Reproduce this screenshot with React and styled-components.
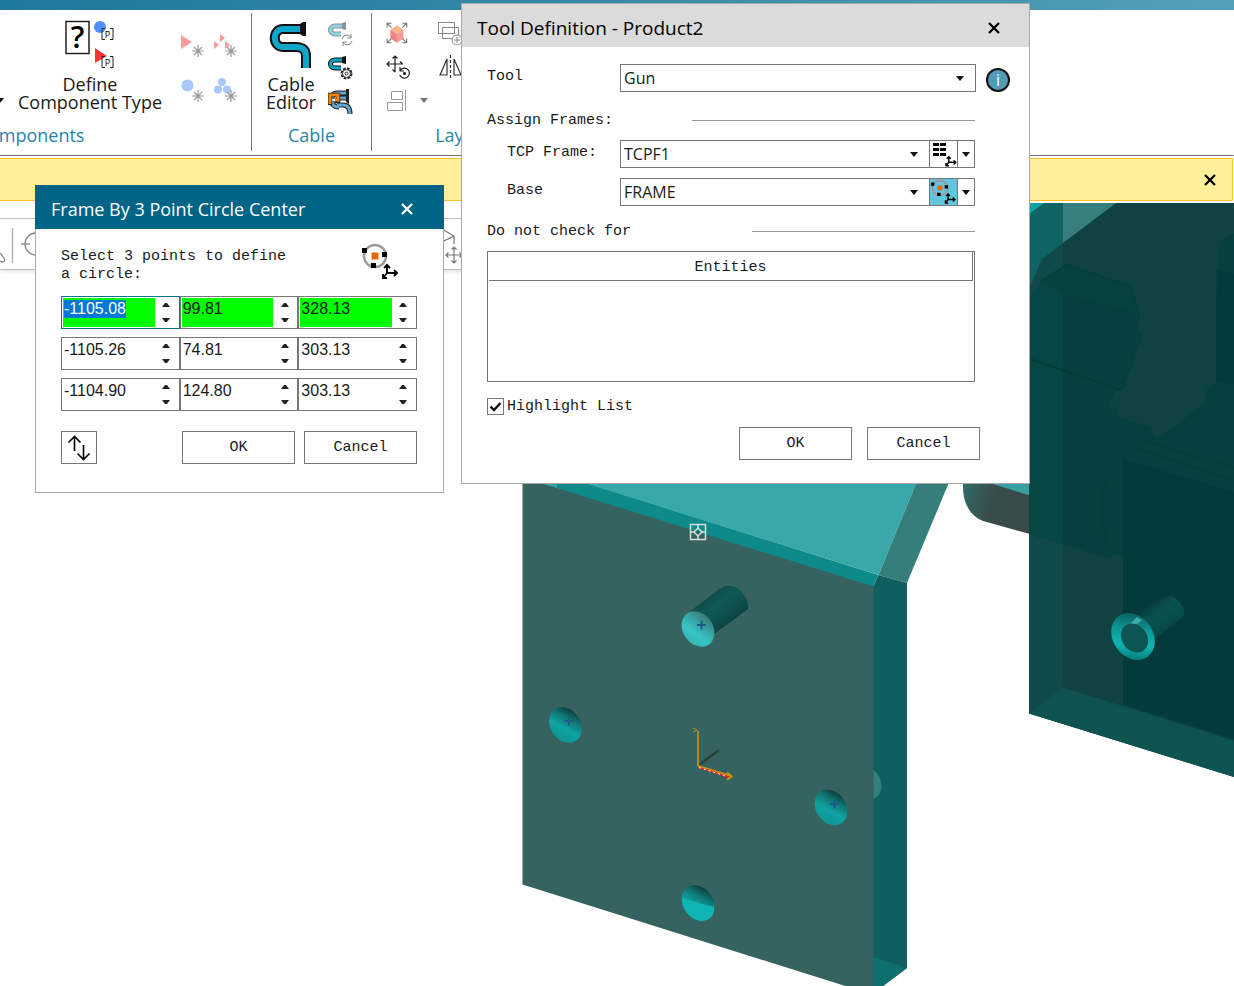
import { useEffect, useRef, useState } from 'react';
import styled, { createGlobalStyle } from 'styled-components';

const POINTS = [
  ['-1105.08', '99.81', '328.13'],
  ['-1105.26', '74.81', '303.13'],
  ['-1104.90', '124.80', '303.13'],
];

export default function App() {
  return (
    <Page>
      <GlobalStyle />
      <TitleStrip />
      <Ribbon />
      <Notice>
        <CloseButton type="button" aria-label="Dismiss message">
          <CloseIcon />
        </CloseButton>
      </Notice>
      <Viewport>
        <Scene />
        <ViewTools />
      </Viewport>
      <FrameDialog />
      <ToolDialog />
    </Page>
  );
}

function Ribbon() {
  return (
    <RibbonBar>
      <RibbonGroup $width={442} $shift={-190}>
        <GroupTools $end>
          <DropArrow />
          <BigButton type="button">
            <DefineTypeIcon />
            <span>Define<br />Component Type</span>
          </BigButton>
          <IconPairs>
            <SmallButton type="button" aria-label="New part"><NewShapeIcon kind="part" /></SmallButton>
            <SmallButton type="button" aria-label="New compound part"><NewShapeIcon kind="parts" /></SmallButton>
            <SmallButton type="button" aria-label="New resource"><NewShapeIcon kind="resource" /></SmallButton>
            <SmallButton type="button" aria-label="New compound resource"><NewShapeIcon kind="resources" /></SmallButton>
          </IconPairs>
        </GroupTools>
        <Caption>Components</Caption>
      </RibbonGroup>
      <RibbonGroup $width={120}>
        <GroupTools $gap={12}>
          <BigButton type="button">
            <CableIcon />
            <span>Cable<br />Editor</span>
          </BigButton>
          <IconColumn>
            <SmallButton type="button" aria-label="Update cable"><CableRefreshIcon /></SmallButton>
            <SmallButton type="button" aria-label="Cable settings"><CableSettingsIcon /></SmallButton>
            <SmallButton type="button" aria-label="Attach cable"><CableClampIcon /></SmallButton>
          </IconColumn>
        </GroupTools>
        <Caption>Cable</Caption>
      </RibbonGroup>
      <RibbonGroup $width={184}>
        <GroupTools>
          <IconColumn>
            <SmallButton type="button" aria-label="Fit to object"><ExplodeIcon /></SmallButton>
            <SmallButton type="button" aria-label="Relocate"><RelocateIcon /></SmallButton>
            <SmallButton type="button" aria-label="Align"><AlignIcon /></SmallButton>
          </IconColumn>
          <AlignArrow>
            <DropArrow color="#777" />
          </AlignArrow>
          <IconColumn>
            <SmallButton type="button" aria-label="Duplicate"><DuplicateIcon /></SmallButton>
            <SmallButton type="button" aria-label="Mirror"><MirrorIcon /></SmallButton>
          </IconColumn>
        </GroupTools>
        <Caption>Layout</Caption>
      </RibbonGroup>
    </RibbonBar>
  );
}

function FrameDialog() {
  const [points, setPoints] = useState(POINTS);
  const firstField = useRef(null);

  useEffect(() => {
    firstField.current.focus();
    firstField.current.select();
  }, []);

  const setValue = (row, col, value) => {
    setPoints(points.map((p, r) => (r === row ? p.map((v, c) => (c === col ? value : v)) : p)));
  };

  const step = (row, col, delta) => {
    setValue(row, col, (Number(points[row][col]) + delta).toFixed(2));
  };

  return (
    <FrameWindow role="dialog" aria-label="Frame By 3 Point Circle Center">
      <FrameHeader>
        <h2>Frame By 3 Point Circle Center</h2>
        <CloseButton type="button" aria-label="Close"><CloseIcon /></CloseButton>
      </FrameHeader>
      <FrameBody>
        <Intro>
          <p>Select 3 points to define<br />a circle:</p>
          <CircleFrameIcon size={38} />
        </Intro>
        <PointList>
          {points.map((point, row) => (
            <PointRow key={row}>
              {point.map((value, col) => (
                <Spin key={col} $active={row === 0 && col === 0}>
                  <SpinInput
                    ref={row === 0 && col === 0 ? firstField : null}
                    aria-label={`Point ${row + 1} ${'XYZ'[col]}`}
                    value={value}
                    $picked={row === 0}
                    onChange={(e) => setValue(row, col, e.target.value)}
                  />
                  <SpinButtons>
                    <button type="button" aria-label="Increase" onClick={() => step(row, col, 1)}>
                      <SpinArrow up />
                    </button>
                    <button type="button" aria-label="Decrease" onClick={() => step(row, col, -1)}>
                      <SpinArrow />
                    </button>
                  </SpinButtons>
                </Spin>
              ))}
            </PointRow>
          ))}
        </PointList>
        <FrameFooter>
          <FlipButton type="button" aria-label="Flip direction">
            <svg width="24" height="26" viewBox="0 0 24 26" fill="none" stroke="#000" strokeWidth="1.6">
              <path d="M7.500 16V1.500M1.500 7.500l6-6 6 6M16.500 10v14M10.500 18.500l6 6 6-6" />
            </svg>
          </FlipButton>
          <FrameActions>
            <DialogButton type="button">OK</DialogButton>
            <DialogButton type="button">Cancel</DialogButton>
          </FrameActions>
        </FrameFooter>
      </FrameBody>
    </FrameWindow>
  );
}

function Dropdown({ id, options }) {
  return (
    <SelectBox>
      <select id={id}>
        {options.map((option) => <option key={option}>{option}</option>)}
      </select>
      <DropArrow />
    </SelectBox>
  );
}

function ToolDialog() {
  return (
    <ToolWindow role="dialog" aria-label="Tool Definition - Product2">
      <ToolHeader>
        <h2>Tool Definition - Product2</h2>
        <CloseButton type="button" aria-label="Close"><CloseIcon /></CloseButton>
      </ToolHeader>
      <ToolBody>
        <ToolRow>
          <FieldLabel htmlFor="tool">Tool</FieldLabel>
          <Dropdown id="tool" options={['Gun', 'Gripper']} />
          <InfoButton type="button" aria-label="Tool information">i</InfoButton>
        </ToolRow>
        <ToolContent>
          <Section $label={205}><span>Assign Frames:</span><hr /></Section>
          <FrameRow>
            <FieldLabel htmlFor="tcp" $indent>TCP Frame:</FieldLabel>
            <Dropdown id="tcp" options={['TCPF1']} />
            <FramePick type="button" aria-label="Pick TCP frame"><GridFrameIcon /></FramePick>
            <FrameMore type="button" aria-label="TCP frame methods"><DropArrow /></FrameMore>
          </FrameRow>
          <FrameRow>
            <FieldLabel htmlFor="base" $indent>Base</FieldLabel>
            <Dropdown id="base" options={['FRAME']} />
            <FramePick type="button" aria-label="Pick base frame" $on><CircleFrameIcon size={26} /></FramePick>
            <FrameMore type="button" aria-label="Base frame methods"><DropArrow /></FrameMore>
          </FrameRow>
          <Section $label={265}><span>Do not check for</span><hr /></Section>
          <EntityBox>
            <EntityTable>
              <thead>
                <tr><th scope="col">Entities</th></tr>
              </thead>
              <tbody />
            </EntityTable>
          </EntityBox>
          <CheckLabel>
            <CheckInput type="checkbox" defaultChecked />
            <svg viewBox="0 0 17 17" fill="none" stroke="#111" strokeWidth="2.400">
              <path d="M3.500 8.500l3.500 3.500 6.500-7" />
            </svg>
            Highlight List
          </CheckLabel>
        </ToolContent>
        <ToolActions>
          <DialogButton type="button">OK</DialogButton>
          <DialogButton type="button">Cancel</DialogButton>
        </ToolActions>
      </ToolBody>
    </ToolWindow>
  );
}

function ViewTools() {
  return (
    <ToolStrip>
      <svg width="36" height="50" viewBox="0 0 36 50" fill="none" stroke="#888" strokeWidth="1.300">
        <path d="M0 34l4 5q2 4-2 4l-2-1" />
        <path d="M12.500 9v35" stroke="#aaa" />
        <circle cx="36" cy="25" r="11" />
        <path d="M21 25h9" />
      </svg>
      <svg width="22" height="50" viewBox="0 0 22 50" fill="none" stroke="#777" strokeWidth="1.200">
        <path d="M0 10l12 7v8M0 23l12-6" />
        <path d="M12 28v16M4 36h16M9.500 30.500L12 28l2.500 2.500M9.500 41.500L12 44l2.500-2.500M6.500 33.500L4 36l2.500 2.500M17.500 33.500L20 36l-2.500 2.500" />
      </svg>
    </ToolStrip>
  );
}

// 3D view of the gun bracket
function Scene() {
  return (
    <SceneSvg viewBox="0 203 1234 783" preserveAspectRatio="xMinYMin slice" aria-label="3D view">
      <defs>
        <linearGradient id="hole" x1="0.1" y1="0.1" x2="0.6" y2="0.9">
          <stop offset="0" stopColor="#0a3534" />
          <stop offset="0.35" stopColor="#0f7775" />
          <stop offset="0.7" stopColor="#0fa3a3" />
          <stop offset="1" stopColor="#0f9896" />
        </linearGradient>
        <linearGradient id="pinFace" x1="0.2" y1="0" x2="0.6" y2="1">
          <stop offset="0" stopColor="#3c6f6e" />
          <stop offset="0.4" stopColor="#38a5a5" />
          <stop offset="0.7" stopColor="#37c6c6" />
          <stop offset="1" stopColor="#37b5b5" />
        </linearGradient>
        <linearGradient id="pinBody" gradientUnits="userSpaceOnUse" x1="700" y1="597" x2="724" y2="628">
          <stop offset="0" stopColor="#0d4342" />
          <stop offset="0.4" stopColor="#0f5957" />
          <stop offset="0.7" stopColor="#0e5250" />
          <stop offset="1" stopColor="#0b4140" />
        </linearGradient>
        <linearGradient id="arm" gradientUnits="userSpaceOnUse" x1="963" y1="490" x2="994" y2="498">
          <stop offset="0" stopColor="#326966" />
          <stop offset="1" stopColor="#384b49" />
        </linearGradient>
        <linearGradient id="ring" x1="0" y1="0.2" x2="0.9" y2="0.8">
          <stop offset="0" stopColor="#0b5451" />
          <stop offset="0.4" stopColor="#0c9896" />
          <stop offset="0.7" stopColor="#10b5b3" />
          <stop offset="1" stopColor="#07807d" />
        </linearGradient>
        <linearGradient id="tube" gradientUnits="userSpaceOnUse" x1="1148" y1="608" x2="1168" y2="634">
          <stop offset="0" stopColor="#06403e" />
          <stop offset="0.3" stopColor="#0b5150" />
          <stop offset="0.7" stopColor="#064e4d" />
          <stop offset="1" stopColor="#0a4442" />
        </linearGradient>
      </defs>

      {/* front plate */}
      <path fill="#366260" d="M522.500 470H540l334 116v409L522.500 884.500z" />
      <path fill="#38a0a0" d="M530 480h30v9z" />
      <path fill="#0f8a8a" d="M557 480h20l301.500 95-5 11.500L557 488z" />
      <path fill="#38a8a8" d="M575 480h342.500l-39 95z" />
      <path fill="#367e7c" d="M917.500 480h32.500l-43 103-28.500-8z" />
      <path fill="#0f5f60" d="M873.500 586.500l5-11.500 28.500 8v385l-24 18h-9.500z" />
      <path fill="#0d706f" d="M873.500 957l33.500 11-24 18h-9.500z" />
      <path fill="#367e7c" d="M873.500 770q8 6 8 17-1 9-8 12z" />

      {/* pin and holes */}
      <path fill="url(#pinBody)" d="M688 613l30-23c9-7 18-5 24 2 5 6 7 14 6 17l-34 25z" />
      <ellipse cx="698" cy="629" rx="19" ry="15" transform="rotate(55 698 629)" fill="url(#pinFace)" />
      <g fill="url(#hole)">
        <ellipse cx="565.500" cy="725" rx="19" ry="15" transform="rotate(55 565.500 725)" />
        <ellipse cx="831" cy="807.500" rx="19" ry="15" transform="rotate(55 831 807.500)" />
        <ellipse cx="698" cy="903" rx="19" ry="15" transform="rotate(55 698 903)" />
      </g>
      <path fill="#0fb5b4" d="M682 898l32 9c1 9-5 14-13 14-10-1-19-11-19-23z" />
      <path
        stroke="#1b5a88"
        strokeWidth="2"
        d="M697 625h9M701.500 620.500v9M564.500 721h9M569 716.500v9M830 804h9M834.500 799.500v9"
      />

      {/* frame axes */}
      <g fill="none">
        <path stroke="#2b4236" strokeWidth="2.500" d="M699 765l20-15" />
        <path stroke="#b58a12" strokeWidth="2" d="M698 766v-35" />
        <path stroke="#8c8c34" strokeWidth="1.200" d="M693 728l4 2-4 2M727 772l4 4-3 4" />
        <path stroke="#c98e10" strokeWidth="2" d="M698 766l33 10" />
        <path stroke="#e22" strokeWidth="1.500" d="M699 767.500l31 10" />
        <path stroke="#fff" strokeWidth="1" strokeDasharray="2 3" d="M699 767.500l28 9" />
        <path stroke="#d09a10" strokeWidth="1.500" d="M727 772.500l5 4-5 3" />
      </g>

      {/* pick marker */}
      <g fill="none" stroke="#d8dcdc" strokeWidth="1.500">
        <path d="M690.500 524.500h15v15h-15zM698 525v3.500M698 535.500v3.500M691 532h3.500M701.500 532h3.500" />
        <path d="M698 528l4 4-4 4-4-4z" />
      </g>
      <path fill="#17605f" d="M697 531h2v2h-2z" />

      {/* second bracket, partly behind the windows */}
      <path fill="url(#arm)" d="M963 480h67v54l-47-13c-13-5-20-18-20-34z" />
      <path fill="#38a0a0" d="M980 480h50v15.500z" />
      <path fill="#104242" d="M1029 203h205v574l-205-63.500z" />
      <path fill="#104949" d="M1029 203h34v485l-34 26z" />
      <path fill="#0f6463" d="M1029 203h34v40l-21 16-13 30z" />
      <path fill="#10a3a1" d="M1029 203h15l-15 11z" />
      <path fill="#367f7c" d="M1063 203h53l-53 40z" />
      <path fill="#0e5350" d="M1029 713.500l34-26 171 53v36.500z" />
      <path
        fill="#073f3e"
        d="M1029 295l8-3 4-11 25-17 64 21 10 29-4 12 5 10-18 54-8 1-5 14 8 4-2 7 34 11 4 9h8l43-33 2-14 9-7V270l3-2v-25l6-6 9-4v507l-111-35V557l-7-4-9 5-78-24z"
      />
      <path fill="#064643" d="M1029 295l8-3 4-11 22-15v278l-34-10z" />
      <path fill="#043a39" d="M1123 459l111 33v246l-111-34z" />
      <path fill="#043a39" d="M1217 270l17 4v110l-18-2z" />
      <path fill="#07423f" d="M1041 281l25-17 64 21 10 29-77-20z" />
      <g fill="none" stroke="#053735" strokeWidth="2">
        <path opacity="0.600" d="M1030 359l91 31" />
        <path opacity="0.250" d="M1041 282l25-17 64 21 10 29-4 12 5 10-18 53" />
        <path opacity="0.250" d="M1106 478q-10 30 2 70M1137 449l97 31M1145 441l89 27" />
      </g>

      {/* hollow tube */}
      <path fill="url(#tube)" d="M1136 616l26-18c7-3 14-1 18 5 4 5 5 9 4 13l-31 24z" />
      <ellipse cx="1133" cy="636.500" rx="25" ry="20" transform="rotate(55 1133 636.500)" fill="url(#ring)" />
      <path fill="#40a9a8" d="M1130 624l7-7 5 3-7 6z" />
      <ellipse cx="1134.500" cy="638" rx="15.500" ry="12.500" transform="rotate(55 1134.500 638)" fill="#0d5552" />
    </SceneSvg>
  );
}

const DropArrow = ({ color = '#111' }) => (
  <svg width="8" height="5" viewBox="0 0 8 5" fill={color}><path d="M0 0h8L4 5z" /></svg>
);

const SpinArrow = ({ up }) => (
  <svg width="8" height="4" viewBox="0 0 8 4" fill="#222">
    <path d={up ? 'M0 4h8L5 0H3z' : 'M0 0h8L5 4H3z'} />
  </svg>
);

const CloseIcon = () => (
  <svg width="12" height="12" viewBox="0 0 12 12" stroke="currentColor" strokeWidth="2.200">
    <path d="M1 1l10 10M11 1L1 11" />
  </svg>
);

// small three axis frame
const AxisMark = () => (
  <path
    fill="none"
    stroke="#000"
    strokeWidth="2"
    d="M4 9V1M1 4l3-3 3 3M4 9h10M11 6l3 3-3 3M4 9l-4 5M0 10v4h4"
  />
);

const CircleFrameIcon = ({ size }) => (
  <svg width={size} height={size} viewBox="0 0 38 38">
    <circle cx="13" cy="13" r="11" fill="none" stroke="#9a9a9a" strokeWidth="2.400" />
    <path fill="#e06a10" d="M9.500 9.500h7v7h-7z" />
    <path fill="#000" d="M0 5h5v5H0zM20 9h5v5h-5zM9 20h5v5H9z" />
    <g transform="translate(21 21)"><AxisMark /></g>
  </svg>
);

const GridFrameIcon = () => (
  <svg width="26" height="26" viewBox="0 0 26 26">
    <path fill="#000" d="M2 2h6v3H2zM9 2h6v3H9zM2 7h6v3H2zM9 7h6v3H9zM2 12h6v3H2zM9 12h6v3H9z" />
    <g transform="translate(15 15) scale(0.7)"><AxisMark /></g>
  </svg>
);

const DefineTypeIcon = () => (
  <svg width="50" height="50" viewBox="0 0 50 50">
    <path fill="#fff" stroke="#222" strokeWidth="1.500" d="M1 1.500h23v32H1z" />
    <text x="12.500" y="28" fontSize="30" fontWeight="600" fontFamily="Open Sans, sans-serif" textAnchor="middle">?</text>
    <circle cx="35" cy="7" r="6" fill="#4d90fa" />
    <path fill="#fb3333" d="M30 28l12 8-12 7z" />
    {[14, 42].map((y) => (
      <g key={y}>
        <path fill="none" stroke="#222" d={`M40 ${y - 5.5}h-3v11h3M45 ${y - 5.5}h3v11h-3`} />
        <text x="42.500" y={y + 4} fontSize="9" fontFamily="Open Sans, sans-serif" textAnchor="middle">P</text>
      </g>
    ))}
  </svg>
);

const SHAPES = {
  part: <path fill="#ff9b9b" d="M0 2l11 7-11 7z" />,
  parts: <path fill="#ff9b9b" d="M6 1l5 4-5 4zM0 8l5 4-5 4zM11 8l5 4-5 4z" />,
  resource: <circle cx="6.500" cy="7.500" r="6" fill="#a9c9fb" />,
  resources: (
    <g fill="#a9c9fb">
      <circle cx="8" cy="4" r="4" />
      <circle cx="4" cy="11.500" r="4" />
      <circle cx="13" cy="11.500" r="4" />
    </g>
  ),
};

const NewShapeIcon = ({ kind }) => (
  <svg width="24" height="24" viewBox="0 0 24 24">
    {SHAPES[kind]}
    <path stroke="#999" strokeWidth="1.200" d="M17 12v12M11 18h12M13 14l8 8M21 14l-8 8" />
  </svg>
);

const CableIcon = () => (
  <svg width="44" height="50" viewBox="0 0 44 50" fill="none">
    <path stroke="#111" strokeWidth="10" d="M32 9H14C3 9 3 27 14 27h13q10 0 10 9v12" />
    <path stroke="#0ea5c9" strokeWidth="6" d="M32 9H14C3 9 3 27 14 27h13q10 0 10 9v12" />
    <path fill="#111" d="M31 4l3-2h3v14h-3l-3-2z" />
  </svg>
);

const SmallCable = ({ color, edge }) => (
  <g fill="none">
    <path stroke={edge} strokeWidth="5" d="M15 5H7C1 5 1 13 7 13h6" />
    <path stroke={color} strokeWidth="3" d="M15 5H7C1 5 1 13 7 13h6" />
    <path fill={edge} d="M14 2l4-1v8l-4-1z" />
  </g>
);

const CableRefreshIcon = () => (
  <svg width="25" height="25" viewBox="0 0 25 25">
    <SmallCable color="#8fd3e6" edge="#8a9599" />
    <path fill="#fff" d="M13 12h12v13H13z" />
    <path fill="none" stroke="#888" d="M14 18q1-4 5-4 3 0 4 3m0-4v4h-4M24 20q-1 4-5 4-3 0-4-3m0 4v-4h4" />
  </svg>
);

const CableSettingsIcon = () => (
  <svg width="25" height="25" viewBox="0 0 25 25">
    <SmallCable color="#0ea5c9" edge="#111" />
    <circle cx="18.500" cy="18.500" r="6" fill="#fff" />
    <circle cx="18.500" cy="18.500" r="5" fill="none" stroke="#222" strokeWidth="2" strokeDasharray="2.600 1.300" />
    <circle cx="18.500" cy="18.500" r="4" fill="#fff" stroke="#222" />
    <circle cx="18.500" cy="18.500" r="1.500" fill="none" stroke="#222" />
  </svg>
);

const CableClampIcon = () => (
  <svg width="25" height="25" viewBox="0 0 25 25" fill="none">
    <path stroke="#222" strokeWidth="5" d="M19 4H9Q4 4 4 10M10 9h9M9 16h6q7 0 7 9M4 12q0 6 7 6" />
    <path stroke="#5fa5cf" strokeWidth="3" d="M19 4H9Q4 4 4 10M10 9h9M9 16h6q7 0 7 9M4 12q0 6 7 6" />
    <path fill="#222" d="M18 0h3v15l-3-2z" />
    <path stroke="#222" strokeWidth="4.500" d="M2 16V6h8v6H7" />
    <path stroke="#f5820b" strokeWidth="3" d="M2 15V6h8v5H7" />
  </svg>
);

const ExplodeIcon = () => (
  <svg width="24" height="24" viewBox="1 0 22 22">
    <path fill="#ffb48f" d="M11 4l6 4-6 4-6-4z" />
    <path fill="#ef8383" d="M5 8l6 4v8l-6-4z" />
    <path fill="#f59a98" d="M17 8l-6 4v8l6-4z" />
    <path fill="none" stroke="#777" d="M2 6V2h4M2 2l4 4M16 2h4v4M20 2l-4 4M2 16v4h4M2 20l4-4M20 16v4h-4M20 20l-4-4" />
  </svg>
);

const RelocateIcon = () => (
  <svg width="24" height="24" viewBox="0 0 24 24" fill="none" stroke="#222" strokeWidth="1.200">
    <path d="M9 1v16M1 9h16M6.500 3.500L9 1l2.500 2.500M6.500 14.500L9 17M3.500 6.500L1 9l2.500 2.500M14 6.500L16.500 9" />
    <path d="M14.500 15a5 5 0 1 1-.8 5M14 12v4h4" />
    <circle cx="18.500" cy="18.500" r="1" fill="#222" />
  </svg>
);

const AlignIcon = () => (
  <svg width="24" height="24" viewBox="0 0 24 24" fill="none" stroke="#999">
    <path d="M19.500 1v21M5.500 2.500h11v8h-11zM1.500 13.500h15v8h-15z" />
  </svg>
);

const DuplicateIcon = () => (
  <svg width="24" height="24" viewBox="0 0 24 24" fill="#fff" stroke="#888">
    <path d="M.5 1.500h16v11H.5zM4.500 6.500h16v11h-16z" />
    <circle cx="19" cy="19" r="5" />
    <path d="M19 16v6M16 19h6" />
  </svg>
);

const MirrorIcon = () => (
  <svg width="24" height="24" viewBox="0 0 24 24" fill="none" stroke="#333" strokeWidth="1.200">
    <path d="M9 4v16H2zM16 4v16h7z" />
    <path d="M12.500 0v24" strokeDasharray="3 2" />
  </svg>
);

const GlobalStyle = createGlobalStyle`
  * {
    box-sizing: border-box;
  }

  body {
    margin: 0;
    background: #fff;
    color: #1a1a1a;
    font-family: "Open Sans", "Noto Sans", sans-serif;
    font-size: 18px;
  }

  button {
    padding: 0;
    border: 0;
    background: none;
    color: inherit;
    font: inherit;
  }

  h2, p {
    margin: 0;
    font: inherit;
  }

  svg {
    display: block;
  }
`;

const Page = styled.div`
  position: relative;
  display: flex;
  flex-direction: column;
  height: 100vh;
  overflow: hidden;
`;

const TitleStrip = styled.div`
  flex: none;
  height: 10px;
  background: linear-gradient(90deg, #1f799a, #3488a7 45%, #529fb8);
`;

const RibbonBar = styled.div`
  flex: none;
  display: flex;
  height: 146px;
  padding: 3px 0 4px;
  border-bottom: 1px solid #777;
  overflow: hidden;
`;

const RibbonGroup = styled.section`
  flex: none;
  display: flex;
  flex-direction: column;
  justify-content: space-between;
  width: ${(p) => p.$width}px;
  margin-left: ${(p) => p.$shift || 0}px;
  border-right: 1px solid #777;
`;

const GroupTools = styled.div`
  display: flex;
  align-items: flex-start;
  justify-content: ${(p) => (p.$end ? 'flex-end' : 'flex-start')};
  gap: ${(p) => p.$gap || 10}px;
  padding: 7px 13px 0 14px;

  > svg {
    align-self: flex-end;
    margin: 0 4px 8px 0;
  }
`;

const Caption = styled.div`
  padding-bottom: 4px;
  line-height: 24px;
  text-align: center;
  color: #2587a8;
`;

const BigButton = styled.button`
  display: flex;
  flex-direction: column;
  align-items: center;
  gap: 5px;
  line-height: 18px;
`;

const SmallButton = styled.button`
  width: 24px;
  height: 24px;
`;

const IconPairs = styled.div`
  display: grid;
  grid-template-columns: 24px 24px;
  gap: 21px 9px;
  padding: 13px 0 0 9px;
`;

const IconColumn = styled.div`
  display: grid;
  gap: 10px;
  padding-top: 1px;
`;

const AlignArrow = styled.div`
  align-self: flex-end;
  padding-bottom: 10px;
`;

const CloseButton = styled.button`
  display: grid;
  place-items: center;
  width: 24px;
  height: 24px;
`;

const Notice = styled.div`
  flex: none;
  display: flex;
  align-items: center;
  justify-content: flex-end;
  height: 43px;
  margin: 2px 1px 2px 0;
  padding-right: 10px;
  border: solid #fbc02d;
  border-width: 1px 1px 1px 0;
  background: #ffee9b;
  color: #000;
`;

const Viewport = styled.main`
  position: relative;
  flex: 1;
  min-height: 0;
`;

const SceneSvg = styled.svg`
  width: 100%;
  height: 100%;
`;

const ToolStrip = styled.div`
  position: absolute;
  top: 15px;
  left: 0;
  display: flex;
  justify-content: space-between;
  width: 464px;
  border: solid #bbb;
  border-width: 1px 0;
  background: #fff;
  box-shadow: 0 2px 4px rgba(0, 0, 0, 0.1);
`;

const Window = styled.div`
  position: absolute;
  border: 1px solid #a9a9a9;
  background: #fff;
`;

const WindowHeader = styled.header`
  display: flex;
  align-items: center;
  justify-content: space-between;
`;

const FrameWindow = styled(Window)`
  top: 185px;
  left: 35px;
  width: 409px;
  border-top: 0;
`;

const FrameHeader = styled(WindowHeader)`
  height: 44px;
  margin: 0 -1px;
  padding: 4px 25px 0 16px;
  background: #006487;
  color: #fff;
`;

const FrameBody = styled.div`
  padding: 14px 26px 28px 25px;
  font-family: "Liberation Mono", monospace;
  font-size: 15px;
`;

const Intro = styled.div`
  display: flex;
  align-items: flex-start;
  justify-content: space-between;
  padding-right: 17px;

  p {
    padding-top: 5px;
    line-height: 18px;
  }
`;

const PointList = styled.div`
  display: grid;
  gap: 8px;
  margin: 12px 0 20px;
`;

const PointRow = styled.div`
  display: grid;
  grid-template-columns: repeat(3, minmax(0, 1fr));
`;

const Spin = styled.div`
  display: flex;
  height: 33px;
  padding: 1px;
  border: 1px solid ${(p) => (p.$active ? '#0b7391' : '#777')};
`;

const SpinInput = styled.input`
  flex: 1;
  min-width: 0;
  padding: 0 0 7px 1px;
  border: 0;
  outline: 0;
  background: ${(p) => (p.$picked ? '#0f0' : '#fff')};
  color: #1a1a1a;
  font: 16px "Liberation Sans", sans-serif;

  &::selection {
    background: #0078d7;
    color: #fff;
  }
`;

const SpinButtons = styled.div`
  display: grid;
  width: 23px;

  button {
    display: grid;
    place-items: center;
  }
`;

const FrameFooter = styled.div`
  display: flex;
  justify-content: space-between;
`;

const FrameActions = styled.div`
  display: flex;
  gap: 9px;
`;

const DialogButton = styled.button`
  width: 113px;
  height: 33px;
  border: 1px solid #777;
  background: #fff;
`;

const FlipButton = styled(DialogButton)`
  display: grid;
  place-items: center;
  width: 36px;
`;

const ToolWindow = styled(Window)`
  top: 3px;
  left: 461px;
  width: 569px;
`;

const ToolHeader = styled(WindowHeader)`
  height: 43px;
  padding: 4px 23px 0 15px;
  background: #dbdbdb;
  color: #000;
  font-size: 19px;
`;

const ToolBody = styled.div`
  padding: 17px 19px 23px 25px;
  font-family: "Liberation Mono", monospace;
  font-size: 15px;
`;

const ToolRow = styled.div`
  display: flex;
  margin-bottom: 3px;
`;

const ToolContent = styled.div`
  padding-right: 35px;
`;

const FieldLabel = styled.label`
  flex: none;
  width: 133px;
  padding-left: ${(p) => (p.$indent ? 20 : 0)}px;
  line-height: 26px;
`;

const SelectBox = styled.div`
  flex: 1;
  display: grid;
  grid-template-columns: 1fr 30px;
  align-items: center;
  height: 28px;
  border: 1px solid #777;

  select {
    grid-area: 1 / 1 / 2 / 3;
    height: 26px;
    padding: 0 30px 0 3px;
    border: 0;
    appearance: none;
    background: none;
    color: #1a1a1a;
    font: 16px "Open Sans", "Noto Sans", sans-serif;
  }

  svg {
    grid-area: 1 / 2;
    justify-self: center;
    pointer-events: none;
  }
`;

const InfoButton = styled.button`
  align-self: flex-end;
  width: 24px;
  height: 24px;
  margin-left: 10px;
  border: 2px solid #111;
  border-radius: 50%;
  background: #529bb6;
  color: #fff;
  font: 16px "Open Sans", sans-serif;
  line-height: 20px;
`;

const Section = styled.div`
  display: grid;
  grid-template-columns: ${(p) => p.$label}px 1fr;
  align-items: center;
  height: 45px;
  padding-top: 6px;

  hr {
    width: 100%;
    margin: 0;
    border: 0;
    border-top: 1px solid #999;
  }
`;

const FrameRow = styled.div`
  display: flex;

  & + & {
    margin-top: 10px;
  }
`;

const FramePick = styled.button`
  display: grid;
  place-items: center;
  width: 28px;
  border: solid #777;
  border-width: 1px 1px 1px 0;
  background: ${(p) => (p.$on ? '#63c5de' : '#fff')};
`;

const FrameMore = styled(FramePick)`
  width: 17px;
`;

const EntityBox = styled.div`
  height: 131px;
  padding: 0 1px;
  border: 1px solid #777;
`;

const EntityTable = styled.table`
  width: 100%;
  border-collapse: separate;
  border-spacing: 0;

  th {
    height: 29px;
    padding: 3px 0 0;
    border: solid #777;
    border-width: 0 1px 1px 0;
    font-weight: 400;
  }
`;

const CheckLabel = styled.label`
  display: grid;
  grid-template-columns: 17px auto;
  justify-content: start;
  align-items: center;
  gap: 3px;
  height: 17px;
  margin-top: 16px;
  line-height: 17px;

  svg {
    grid-area: 1 / 1;
    pointer-events: none;
  }

  input:not(:checked) + svg {
    visibility: hidden;
  }
`;

const CheckInput = styled.input`
  grid-area: 1 / 1;
  appearance: none;
  width: 17px;
  height: 17px;
  margin: 0;
  border: 1px solid #777;
`;

const ToolActions = styled.div`
  display: flex;
  justify-content: flex-end;
  gap: 15px;
  margin-top: 12px;
  padding-right: 30px;
`;
